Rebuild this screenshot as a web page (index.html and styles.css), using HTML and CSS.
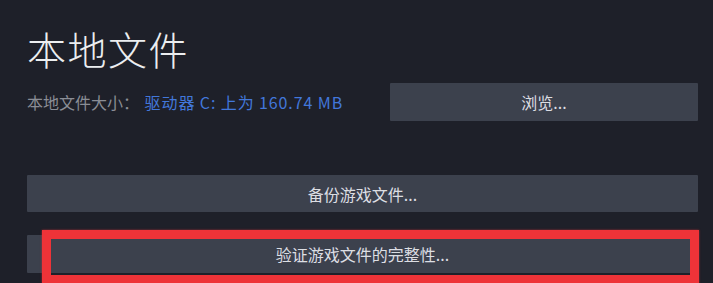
FILE: index.html
```html
<!DOCTYPE html>
<html lang="zh-CN">
<head>
<meta charset="utf-8">
<title>本地文件</title>
<link rel="stylesheet" href="styles.css">
</head>
<body>
<main class="panel">
  <h1 class="title">本地文件</h1>
  <div class="size-row">
    <div class="size-info">
      <span class="size-label">本地文件大小：</span>
      <span class="size-value">驱动器 C: 上为 160.74 MB</span>
    </div>
    <button class="btn btn-browse">浏览...</button>
  </div>
  <button class="btn btn-wide btn-backup">备份游戏文件...</button>
  <div class="verify-wrap">
    <button class="btn btn-wide btn-verify">验证游戏文件的完整性...</button>
    <div class="highlight"></div>
  </div>
</main>
</body>
</html>
```
FILE: styles.css
```css
html, body {
  margin: 0;
  padding: 0;
  height: 100%;
  overflow: hidden;
  background: #1e2029;
}
body {
  font-family: "Noto Sans CJK SC", "Noto Sans", sans-serif;
  color: #dcdee3;
}
.panel {
  padding: 19px 15px 0 27px;
  display: flex;
  flex-direction: column;
}
.title {
  margin: 0;
  font-size: 39px;
  font-weight: 300;
  line-height: 58px;
  letter-spacing: 1.5px;
  color: #eceef0;
}
.size-row {
  display: flex;
  align-items: center;
  justify-content: space-between;
  margin-top: 6px;
}
.size-info {
  font-size: 16px;
  line-height: 22px;
}
.size-label {
  color: #8a8d95;
}
.size-value {
  color: #4277da;
  margin-left: 2px;
  letter-spacing: 0.9px;
}
.btn {
  font-family: inherit;
  border: none;
  background: #3c414d;
  color: #dcdee3;
  font-size: 16px;
  height: 38px;
  padding: 0;
  border-radius: 1px;
}
.btn-browse {
  width: 308px;
}
.btn-wide {
  width: 100%;
}
.btn-backup {
  margin-top: 54px;
  height: 37px;
}
.verify-wrap {
  position: relative;
  margin-top: 23px;
}
.btn-verify {
  display: block;
}
.highlight {
  position: absolute;
  left: 15px;
  right: -1px;
  top: -5px;
  bottom: -11px;
  border: 9px solid #ee3338;
  box-shadow: 0 0 2px rgba(238, 51, 56, 0.6);
  pointer-events: none;
}
```
